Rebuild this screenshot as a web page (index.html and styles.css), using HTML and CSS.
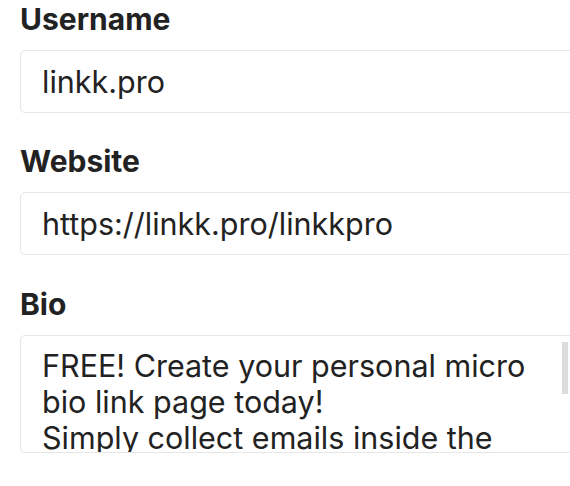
FILE: index.html
```html
<!DOCTYPE html>
<html>
<head>
<meta charset="utf-8">
<link rel="stylesheet" href="styles.css">
</head>
<body>
<form class="form">
  <div class="field">
    <label class="label" for="username">Username</label>
    <input class="control" id="username" type="text" value="linkk.pro">
  </div>
  <div class="field">
    <label class="label" for="website">Website</label>
    <input class="control" id="website" type="text" value="https://linkk.pro/linkkpro">
  </div>
  <div class="field">
    <label class="label" for="bio">Bio</label>
    <div class="area-wrap">
      <textarea class="control area" id="bio">FREE! Create your personal micro
bio link page today!
Simply collect emails inside the
platform and grow your audience.</textarea>
      <span class="thumb"></span>
    </div>
  </div>
</form>
</body>
</html>
```
FILE: styles.css
```css
html, body {
  margin: 0;
  padding: 0;
  background: #fff;
  overflow: hidden;
}
body {
  width: 570px;
  height: 486px;
  font-family: Inter, "Liberation Sans", sans-serif;
  color: #212529;
}
.form {
  display: flex;
  flex-direction: column;
  gap: 29px;
  padding: 0 0 0 20px;
}
.field {
  display: flex;
  flex-direction: column;
}
.field:last-child {
  margin-top: 1px;
}
.label {
  font-size: 30px;
  font-weight: 700;
  line-height: 38px;
  height: 38px;
  margin-bottom: 12px;
  color: #222;
}
.control {
  box-sizing: border-box;
  width: 560px;
  height: 63px;
  margin: 0;
  padding: 0 21px;
  border: 1.5px solid #e6e6e6;
  border-radius: 5px;
  font-family: inherit;
  font-size: 30.5px;
  color: #222;
  background: #fff;
  outline: none;
}
.area-wrap {
  position: relative;
  width: 560px;
}
.area {
  display: block;
  height: 118px;
  padding: 12px 21px;
  line-height: 36px;
  white-space: pre;
  overflow: hidden;
  resize: both;
}
.thumb {
  position: absolute;
  left: 542px;
  top: 7px;
  width: 6px;
  height: 52px;
  background: #dcdcdc;
}
```
